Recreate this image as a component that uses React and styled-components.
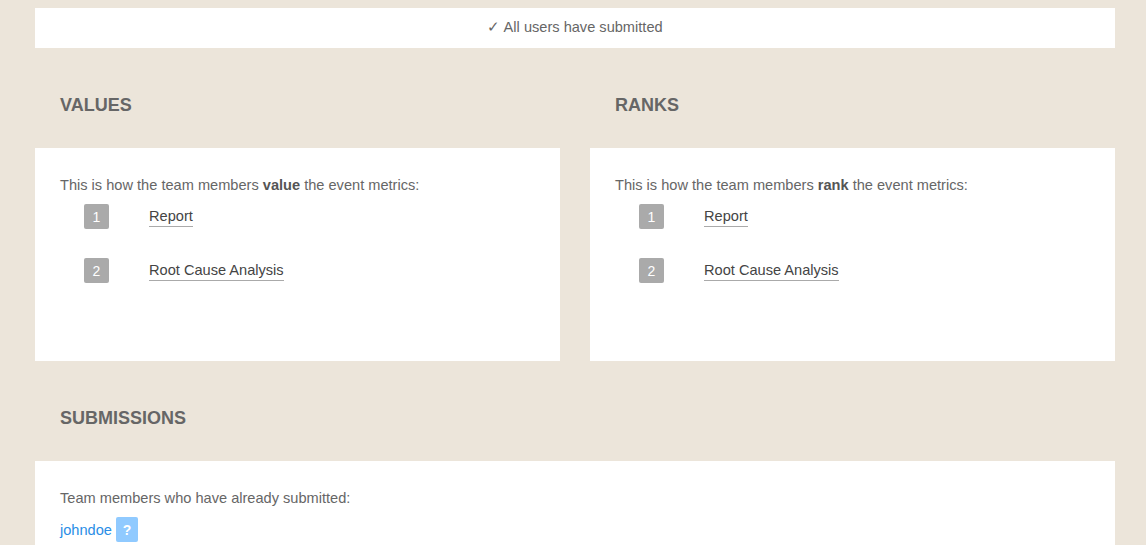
import React from "react";
import styled, { createGlobalStyle } from "styled-components";

const GlobalStyle = createGlobalStyle`
  html, body {
    margin: 0;
    padding: 0;
    background: #ece5da;
  }
  body {
    font-family: "Liberation Sans", Arial, sans-serif;
    color: #666;
    font-size: 14.6px;
  }
`;

const Page = styled.div`
  width: 1080px;
  margin-left: 35px;
  padding-top: 8px;
`;

const StatusBar = styled.div`
  background: #fff;
  height: 40px;
  box-sizing: border-box;
  padding-bottom: 4px;
  display: flex;
  align-items: center;
  justify-content: center;
  color: #666;
`;

const Columns = styled.div`
  display: grid;
  grid-template-columns: 1fr 1fr;
  column-gap: 30px;
`;

const Heading = styled.h2`
  margin: 0;
  height: 100px;
  box-sizing: border-box;
  padding: 47px 25px 0;
  font-size: 18px;
  font-weight: bold;
  color: #666;
  line-height: 20px;
`;

const Panel = styled.div`
  background: #fff;
  padding: 28px 25px 0;
  height: ${(p) => p.$height || "auto"};
  box-sizing: border-box;
`;

const Intro = styled.p`
  margin: 0;
  line-height: 18px;
  color: #666;

  b {
    color: #555;
  }
`;

const List = styled.ol`
  list-style: none;
  margin: 10px 0 0;
  padding: 0 0 0 24px;
`;

const Item = styled.li`
  display: flex;
  align-items: center;
  height: 25px;
  margin-bottom: 29px;
`;

const Badge = styled.span`
  width: 25px;
  height: 25px;
  border-radius: 2px;
  background: #aaa;
  color: #fff;
  display: flex;
  align-items: center;
  justify-content: center;
  font-size: 14px;
  margin-right: 40px;
`;

const MetricLink = styled.a`
  color: #444;
  text-decoration: none;
  border-bottom: 1px solid #aaa;
  line-height: 17px;
  padding-bottom: 1px;
  margin-top: 1px;
`;

const UserRow = styled.div`
  display: flex;
  align-items: center;
  margin-top: 10px;
`;

const UserLink = styled.a`
  color: #2a8ee6;
  text-decoration: none;
  margin-right: 4px;
`;

const HelpBadge = styled.span`
  width: 22px;
  height: 25px;
  border-radius: 2px;
  background: #90caff;
  color: #fff;
  font-weight: bold;
  display: flex;
  align-items: center;
  justify-content: center;
  font-size: 14px;
`;

const metrics = ["Report", "Root Cause Analysis"];

const MetricPanel = ({ title, verb }) => (
  <div>
    <Heading>{title}</Heading>
    <Panel $height="213px">
      <Intro>
        This is how the team members <b>{verb}</b> the event metrics:
      </Intro>
      <List>
        {metrics.map((m, i) => (
          <Item key={m}>
            <Badge>{i + 1}</Badge>
            <MetricLink href="#">{m}</MetricLink>
          </Item>
        ))}
      </List>
    </Panel>
  </div>
);

export default function App() {
  return (
    <Page>
      <GlobalStyle />
      <StatusBar>✓ All users have submitted</StatusBar>
      <Columns>
        <MetricPanel title="VALUES" verb="value" />
        <MetricPanel title="RANKS" verb="rank" />
      </Columns>
      <Heading>SUBMISSIONS</Heading>
      <Panel $height="120px">
        <Intro>Team members who have already submitted:</Intro>
        <UserRow>
          <UserLink href="#">johndoe</UserLink>
          <HelpBadge>?</HelpBadge>
        </UserRow>
      </Panel>
    </Page>
  );
}
